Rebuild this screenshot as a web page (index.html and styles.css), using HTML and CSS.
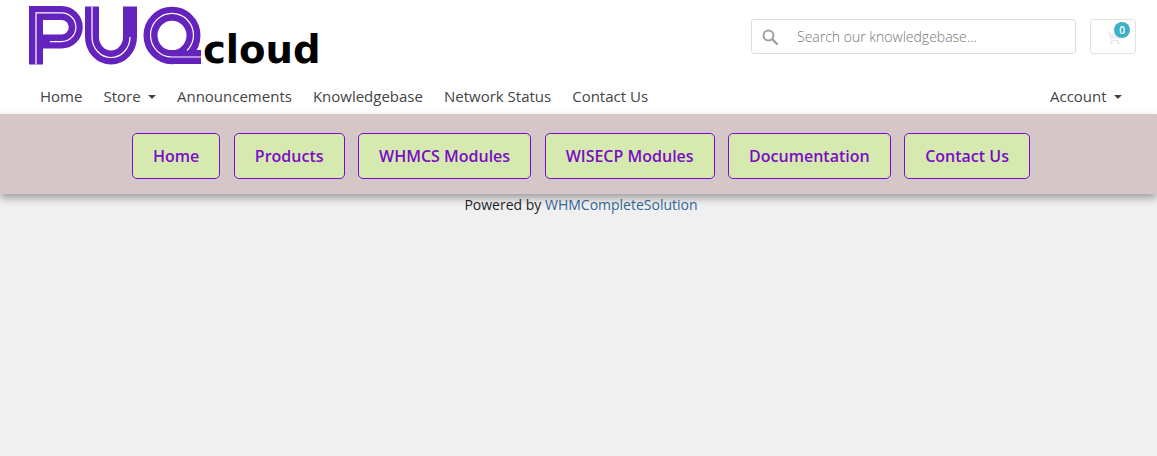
FILE: index.html
```html
<!DOCTYPE html>
<html lang="en">
<head>
<meta charset="utf-8">
<title>PUQcloud</title>
<link rel="stylesheet" href="styles.css">
</head>
<body>
<header class="header">
  <div class="top-row">
    <a class="logo" href="#" aria-label="PUQcloud">
      <svg class="logo-mark" viewBox="29 6 174 59" width="174" height="59" aria-hidden="true">
        <g fill="none" stroke="#6423bd" stroke-width="14">
          <path d="M36 64.500V13H61.500A14.250 14.250 0 0 1 61.500 41.500H43"/>
          <path d="M92 6.500V37A19 20.500 0 0 0 130 37V6.500"/>
          <ellipse cx="172" cy="35.500" rx="21.500" ry="21.800"/>
        </g>
        <path class="logo-tail" d="M170 50H201V64H172Z"/>
        <g fill="none" stroke="#fff" stroke-width="1.200">
          <path d="M36 64.500V12.800H61.500A14.400 14.400 0 0 1 61.500 41.600H50"/>
          <path d="M92 6.500V37A19 20.500 0 0 0 130 37"/>
          <path d="M201 57H172A21.500 21.800 0 1 1 193.500 35.500A21.500 21.800 0 0 1 187 50.500"/>
        </g>
      </svg>
      <span class="logo-word">cloud</span>
    </a>
    <div class="tools">
      <form class="search">
        <svg class="search-icon" viewBox="0 0 16 16" width="16" height="16" aria-hidden="true">
          <circle cx="6.500" cy="6.500" r="5" fill="none" stroke="#a0a0a0" stroke-width="2"/>
          <path d="M10.200 10.200L15 15" stroke="#a0a0a0" stroke-width="2.400" stroke-linecap="round"/>
        </svg>
        <input class="search-input" type="text" placeholder="Search our knowledgebase...">
      </form>
      <a class="cart" href="#" aria-label="Cart">
        <svg viewBox="0 0 16 14" width="16" height="14" aria-hidden="true">
          <path d="M0.500 1H3L5 9.500H13" fill="none" stroke="#e4e4e4" stroke-width="1"/>
          <path d="M3.500 2.500H15L13.500 7.500H4.500Z" fill="#ececec"/>
          <circle cx="5.500" cy="12" r="1.300" fill="#e4e4e4"/>
          <circle cx="12" cy="12" r="1.300" fill="#e4e4e4"/>
        </svg>
        <span class="badge">0</span>
      </a>
    </div>
  </div>
  <nav class="nav-row">
    <ul class="nav-list">
      <li><a class="nav-link" href="#">Home</a></li>
      <li><a class="nav-link caret" href="#">Store</a></li>
      <li><a class="nav-link" href="#">Announcements</a></li>
      <li><a class="nav-link" href="#">Knowledgebase</a></li>
      <li><a class="nav-link" href="#">Network Status</a></li>
      <li><a class="nav-link" href="#">Contact Us</a></li>
    </ul>
    <a class="nav-link caret" href="#">Account</a>
  </nav>
</header>
<section class="band">
  <a class="pill" href="#">Home</a>
  <a class="pill" href="#">Products</a>
  <a class="pill" href="#">WHMCS Modules</a>
  <a class="pill" href="#">WISECP Modules</a>
  <a class="pill" href="#">Documentation</a>
  <a class="pill" href="#">Contact Us</a>
</section>
<p class="powered">Powered by <a href="#">WHMCompleteSolution</a></p>
</body>
</html>
```
FILE: styles.css
```css
* { box-sizing: border-box; }
html, body { margin: 0; padding: 0; }
body {
  height: 456px;
  overflow: hidden;
  background: #f0f0f0;
  font-family: "Open Sans", sans-serif;
  font-size: 14px;
  color: #212529;
}
a { text-decoration: none; }
.header { background: #fff; height: 114px; }
.top-row {
  height: 79px;
  display: flex;
  justify-content: space-between;
  align-items: flex-start;
  padding-right: 21px;
}
.logo {
  display: flex;
  align-items: flex-start;
  margin: 6px 0 0 29px;
  height: 59px;
}
.logo-mark { display: block; flex: none; }
.logo-tail { fill: #6423bd; }
.logo-word {
  font-family: "DejaVu Sans", sans-serif;
  font-weight: 700;
  font-size: 38.6px;
  line-height: 38px;
  color: #000;
  margin: 25px 0 0 0;
}
.tools { display: flex; gap: 14px; margin-top: 19px; }
.search { position: relative; width: 325px; height: 35px; }
.search-icon { position: absolute; left: 11px; top: 10px; }
.search-input {
  width: 100%;
  height: 100%;
  border: 1px solid #ddd;
  border-radius: 3px;
  padding: 0 10px 0 45px;
  font: 300 14px "Open Sans", sans-serif;
  background: #fff;
  outline: none;
}
.search-input::placeholder { color: #777; opacity: 1; }
.cart {
  position: relative;
  width: 46px;
  height: 35px;
  border: 1px solid #e2e2e2;
  border-radius: 3px;
  display: flex;
  align-items: center;
  padding-left: 15px;
  padding-top: 2px;
}
.badge {
  position: absolute;
  top: 2px;
  right: 5px;
  width: 16px;
  height: 16px;
  border-radius: 50%;
  background: #3fb0c6;
  color: #fff;
  font-size: 10px;
  font-weight: 600;
  line-height: 16px;
  text-align: center;
}
.nav-row {
  height: 33px;
  display: flex;
  justify-content: space-between;
  align-items: center;
  padding: 0 35px 0 40px;
}
.nav-list {
  display: flex;
  gap: 21px;
  list-style: none;
  margin: 0;
  padding: 0;
}
.nav-link { color: #444; font-size: 15px; line-height: 20px; display: block; }
.caret::after {
  content: "";
  display: inline-block;
  margin-left: 7.400px;
  vertical-align: 3px;
  border-top: 4px solid #444;
  border-left: 4px solid transparent;
  border-right: 4px solid transparent;
}
.band {
  height: 80px;
  background: #d5c7c7;
  box-shadow: 0 4px 8px rgba(0, 0, 0, 0.35);
  display: flex;
  justify-content: center;
  align-items: flex-start;
  gap: 13.500px;
  padding: 19px 0 0 5px;
  position: relative;
}
.pill {
  height: 46px;
  padding: 0 20px;
  display: flex;
  align-items: center;
  background: #d6eab0;
  border: 1px solid #7a0bd0;
  border-radius: 5px;
  color: #7a0bc8;
  font-size: 16px;
  font-weight: 600;
}
.powered {
  margin: 0;
  padding-left: 5px;
  text-align: center;
  font-size: 14px;
  line-height: 21px;
}
.powered a { color: #336699; }
```
